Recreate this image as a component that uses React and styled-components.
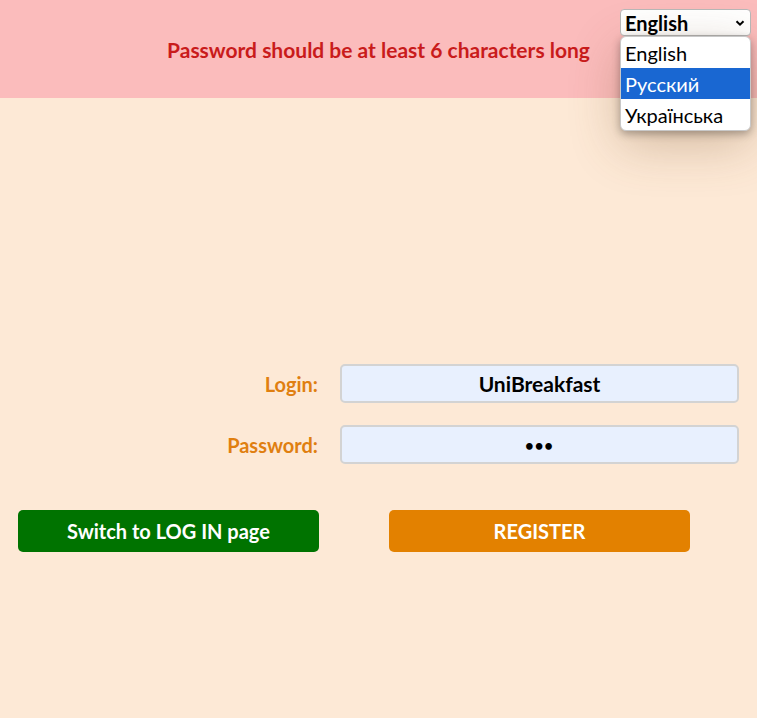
import styled, { createGlobalStyle } from "styled-components";

const GlobalStyle = createGlobalStyle`
    html, body {
        margin: 0;
        padding: 0;
        height: 100%;
        background-color: #fde9d6;
        font-family: "Lato", "Open Sans", "DejaVu Sans", sans-serif;
    }
    #root {
        min-height: 100%;
    }
`;

const Page = styled.div`
    min-height: 718px;
    background-color: #fde9d6;
    position: relative;
`;

const Header = styled.header`
    height: 98px;
    background-color: #fbbcbc;
    display: flex;
    align-items: center;
    justify-content: center;
`;

const ErrorText = styled.p`
    margin: 0;
    color: #c91b1b;
    font-size: 21px;
    font-weight: 700;
`;

const LangBox = styled.div`
    position: absolute;
    top: 9px;
    right: 6px;
    width: 131px;
`;

const SelectBox = styled.div`
    height: 27px;
    box-sizing: border-box;
    background-color: #fff;
    border: 1px solid #b8b8b8;
    border-radius: 4px;
    display: flex;
    align-items: center;
    justify-content: space-between;
    padding: 0 4px 0 4px;
    font-size: 20px;
    font-weight: 700;
    color: #000;
`;

const Options = styled.ul`
    list-style: none;
    margin: 0;
    padding: 0;
    background-color: #fff;
    border-radius: 6px;
    overflow: hidden;
    box-shadow: 0 3px 8px rgba(0, 0, 0, 0.3), 0 14px 50px rgba(120, 80, 40, 0.3);
    border: 1px solid #c8c8c8;
`;

const Option = styled.li`
    height: 31px;
    display: flex;
    align-items: center;
    padding: 0 4px;
    font-size: 20px;
    color: ${({ selected }) => (selected ? "#fff" : "#000")};
    background-color: ${({ selected }) => (selected ? "#1967d2" : "transparent")};
`;

const Form = styled.form`
    display: grid;
    grid-template-columns: 300px 399px;
    column-gap: 22px;
    row-gap: 22px;
    padding: 266px 18px 0 18px;
    align-items: center;
`;

const Label = styled.label`
    justify-self: end;
    color: #e07f10;
    font-size: 20px;
    font-weight: 700;
`;

const Input = styled.input`
    box-sizing: border-box;
    width: 100%;
    height: 39px;
    border: 2px solid #d3d3d3;
    border-radius: 5px;
    background-color: #e8f0fe;
    text-align: center;
    font-family: inherit;
    font-size: ${({ type }) => (type === "password" ? "15px" : "21px")};
    font-weight: 700;
    color: #000;
    outline: none;
    letter-spacing: ${({ type }) => (type === "password" ? "1px" : "normal")};
`;

const ButtonRow = styled.div`
    grid-column: 1 / span 2;
    display: grid;
    grid-template-columns: 300px 399px;
    column-gap: 22px;
    margin-top: 24px;
`;

const Button = styled.button`
    height: 42px;
    width: 301px;
    justify-self: ${({ center }) => (center ? "center" : "start")};
    border: none;
    border-radius: 5px;
    background-color: ${({ bg }) => bg};
    color: #fff;
    font-family: inherit;
    font-size: 20px;
    font-weight: 700;
    cursor: pointer;
`;

function Chevron() {
    return (
        <svg width="12" height="12" viewBox="0 0 12 12">
            <path d="M2.5 4.2 L6 7.7 L9.5 4.2" fill="none" stroke="#000" strokeWidth="2" />
        </svg>
    );
}

const langs = ["English", "Русский", "Українська"];

export default function App() {
    return (
        <Page>
            <GlobalStyle />
            <Header>
                <ErrorText>Password should be at least 6 characters long</ErrorText>
            </Header>

            <LangBox>
                <SelectBox>
                    English
                    <Chevron />
                </SelectBox>
                <Options>
                    {langs.map(l => (
                        <Option key={l} selected={l === "Русский"}>{l}</Option>
                    ))}
                </Options>
            </LangBox>

            <Form onSubmit={e => e.preventDefault()}>
                <Label htmlFor="login">Login:</Label>
                <Input id="login" defaultValue="UniBreakfast" />
                <Label htmlFor="password">Password:</Label>
                <Input id="password" type="password" defaultValue="123" />
                <ButtonRow>
                    <Button type="button" bg="#007300">Switch to LOG IN page</Button>
                    <Button type="submit" bg="#e38100" center>REGISTER</Button>
                </ButtonRow>
            </Form>
        </Page>
    );
}
